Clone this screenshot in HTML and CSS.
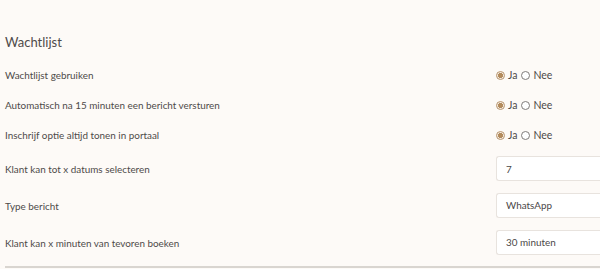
FILE: index.html
```html
<!DOCTYPE html>
<html>
<head>
    <meta charset="UTF-8">
    <title>Wachtlijst</title>
    <link rel="stylesheet" href="styles.css">
</head>
<body>
    <div class="settings">
        <h2 class="section-title">Wachtlijst</h2>

        <div class="setting-row radio-row">
            <label class="setting-label">Wachtlijst gebruiken</label>
            <div class="radio-group">
                <label class="radio-label"><input type="radio" name="use" checked> Ja</label>
                <label class="radio-label"><input type="radio" name="use"> Nee</label>
            </div>
        </div>

        <div class="setting-row radio-row">
            <label class="setting-label">Automatisch na 15 minuten een bericht versturen</label>
            <div class="radio-group">
                <label class="radio-label"><input type="radio" name="auto" checked> Ja</label>
                <label class="radio-label"><input type="radio" name="auto"> Nee</label>
            </div>
        </div>

        <div class="setting-row radio-row">
            <label class="setting-label">Inschrijf optie altijd tonen in portaal</label>
            <div class="radio-group">
                <label class="radio-label"><input type="radio" name="portal" checked> Ja</label>
                <label class="radio-label"><input type="radio" name="portal"> Nee</label>
            </div>
        </div>

        <div class="setting-row input-row">
            <label class="setting-label">Klant kan tot x datums selecteren</label>
            <input type="text" class="text-input" value="7">
        </div>

        <div class="setting-row input-row">
            <label class="setting-label">Type bericht</label>
            <div class="text-input">WhatsApp</div>
        </div>

        <div class="setting-row input-row">
            <label class="setting-label">Klant kan x minuten van tevoren boeken</label>
            <div class="text-input">30 minuten</div>
        </div>

        <div class="divider"></div>
    </div>
</body>
</html>
```

FILE: styles.css
```css
* {
    margin: 0;
    padding: 0;
    box-sizing: border-box;
    font-family: Lato, 'Open Sans', sans-serif;
}

body {
    background-color: #fdfaf7;
    overflow: hidden;
    color: #4d4a49;
}

.settings {
    width: 600px;
    padding: 32px 0 0 5px;
}

.section-title {
    font-size: 13px;
    font-weight: normal;
    line-height: 20px;
    height: 28px;
    color: #4f4b4a;
}

.setting-row {
    display: flex;
    align-items: center;
}

.radio-row {
    height: 30px;
}

.input-row {
    height: 37px;
}

.setting-label {
    width: 491px;
    font-size: 9.9px;
}

.radio-group {
    display: flex;
    gap: 4px;
    font-size: 10.5px;
}

.radio-label {
    display: flex;
    align-items: center;
    gap: 3px;
}

input[type="radio"] {
    appearance: none;
    width: 9px;
    height: 9px;
    border: 1px solid #807c7a;
    border-radius: 50%;
    background: #fff;
}

input[type="radio"]:checked {
    border-color: #b8946c;
    background: radial-gradient(circle, #b38b5d 0 2.3px, #f4ece2 2.8px);
}

.text-input {
    display: block;
    width: 104px;
    height: 25px;
    padding: 0 9px;
    font-size: 9.9px;
    line-height: 23px;
    color: #4a4747;
    background: #fff;
    border: 1px solid #e8e3de;
    border-right: none;
    border-radius: 3px 0 0 3px;
}

.divider {
    margin-top: 5px;
    height: 2px;
    background: #d9d5d0;
}
```
